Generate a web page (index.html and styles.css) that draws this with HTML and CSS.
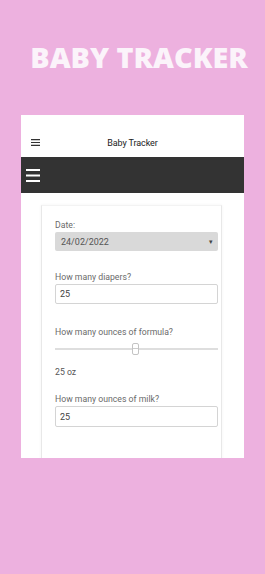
FILE: index.html
```html
<!DOCTYPE html>
<html>
<head>
<meta charset="utf-8">
<link rel="stylesheet" href="styles.css">
</head>
<body>
<h1 class="title">BABY TRACKER</h1>
<div class="phone">
  <header class="appbar">
    <svg class="menu-small" width="9" height="7" viewBox="0 0 9 7"><path d="M0 .6h9M0 3.5h9M0 6.4h9" stroke="#333" stroke-width="1.2"/></svg>
    <div class="appbar-title">Baby Tracker</div>
    <span></span>
  </header>
  <nav class="darkbar">
    <svg class="menu-big" width="14" height="13" viewBox="0 0 14 13"><path d="M0 1h14M0 6.5h14M0 12h14" stroke="#fff" stroke-width="1.8"/></svg>
  </nav>
  <main class="content">
    <form class="card">
      <label class="label">Date:</label>
      <div class="select"><span>24/02/2022</span><span class="arrow">&#9662;</span></div>
      <label class="label gap">How many diapers?</label>
      <div class="input">25</div>
      <label class="label gap2">How many ounces of formula?</label>
      <div class="slider"><div class="track"></div><div class="thumb"></div></div>
      <div class="value">25 oz</div>
      <label class="label gap3">How many ounces of milk?</label>
      <div class="input tall">25</div>
    </form>
  </main>
</div>
</body>
</html>
```
FILE: styles.css
```css
html, body {
  margin: 0;
  padding: 0;
}
body {
  background: #edb1df;
  width: 265px;
  height: 574px;
  overflow: hidden;
  font-family: Roboto, "Liberation Sans", sans-serif;
}
.title {
  margin: 0;
  padding-top: 43px;
  padding-left: 13px;
  text-align: center;
  font-family: "Open Sans", sans-serif;
  font-weight: 800;
  font-size: 28.8px;
  line-height: 28px;
  color: #fbf3fa;
  letter-spacing: 0;
}
.phone {
  margin: 44px 0 0 21px;
  width: 223px;
  height: 343px;
  background: #fff;
  overflow: hidden;
}
.appbar {
  height: 42px;
  box-sizing: border-box;
  padding: 13px 10px 0 10px;
  display: grid;
  grid-template-columns: 1fr auto 1fr;
  align-items: center;
}
.menu-small { display: block; }
.appbar-title {
  font-size: 9px;
  line-height: 12px;
  color: #222;
  letter-spacing: -0.1px;
}
.darkbar {
  height: 36px;
  background: #333333;
  display: flex;
  align-items: center;
  padding-left: 5px;
}
.menu-big { display: block; }
.content {
  padding: 12px 22px 0 20px;
}
.card {
  display: flex;
  flex-direction: column;
  border: 1px solid #e8e8e8;
  border-top-color: #f3f3f3;
  box-shadow: 0 0 3px rgba(0,0,0,0.05);
  padding: 13px 3px 40px 13px;
  height: 300px;
}
.label {
  font-size: 8.7px;
  line-height: 12px;
  color: #6a6a6a;
  margin-bottom: 1px;
}
.label.gap { margin-top: 20px; margin-bottom: 1px; }
.label.gap2 { margin-top: 22px; }
.label.gap3 { margin-top: 15px; margin-bottom: 1px; }
.select {
  height: 19px;
  background: #d9d9d9;
  border-radius: 2px;
  display: flex;
  align-items: center;
  justify-content: space-between;
  padding: 0 5px 0 6px;
  font-size: 9px;
  color: #555;
}
.arrow {
  font-size: 7px;
  color: #444;
}
.input {
  height: 20px;
  box-sizing: border-box;
  border: 1px solid #d4d4d4;
  border-radius: 2px;
  display: flex;
  align-items: center;
  padding-left: 4px;
  font-size: 9px;
  color: #444;
}
.input.tall { height: 21px; }
.slider {
  position: relative;
  height: 20px;
}
.track {
  margin-top: 9px;
  height: 2px;
  background: #dedede;
}
.thumb {
  position: absolute;
  left: 77px;
  top: 4px;
  width: 7px;
  height: 12px;
  box-sizing: border-box;
  border: 1px solid #c4c4c4;
  border-radius: 2px;
  background: repeating-linear-gradient(#fff 0 4px, #ccc 4px 5px, #fff 5px 6px);
  background-color: #fff;
}
.value {
  margin-top: 7px;
  font-size: 8.7px;
  line-height: 12px;
  color: #555;
}
```
